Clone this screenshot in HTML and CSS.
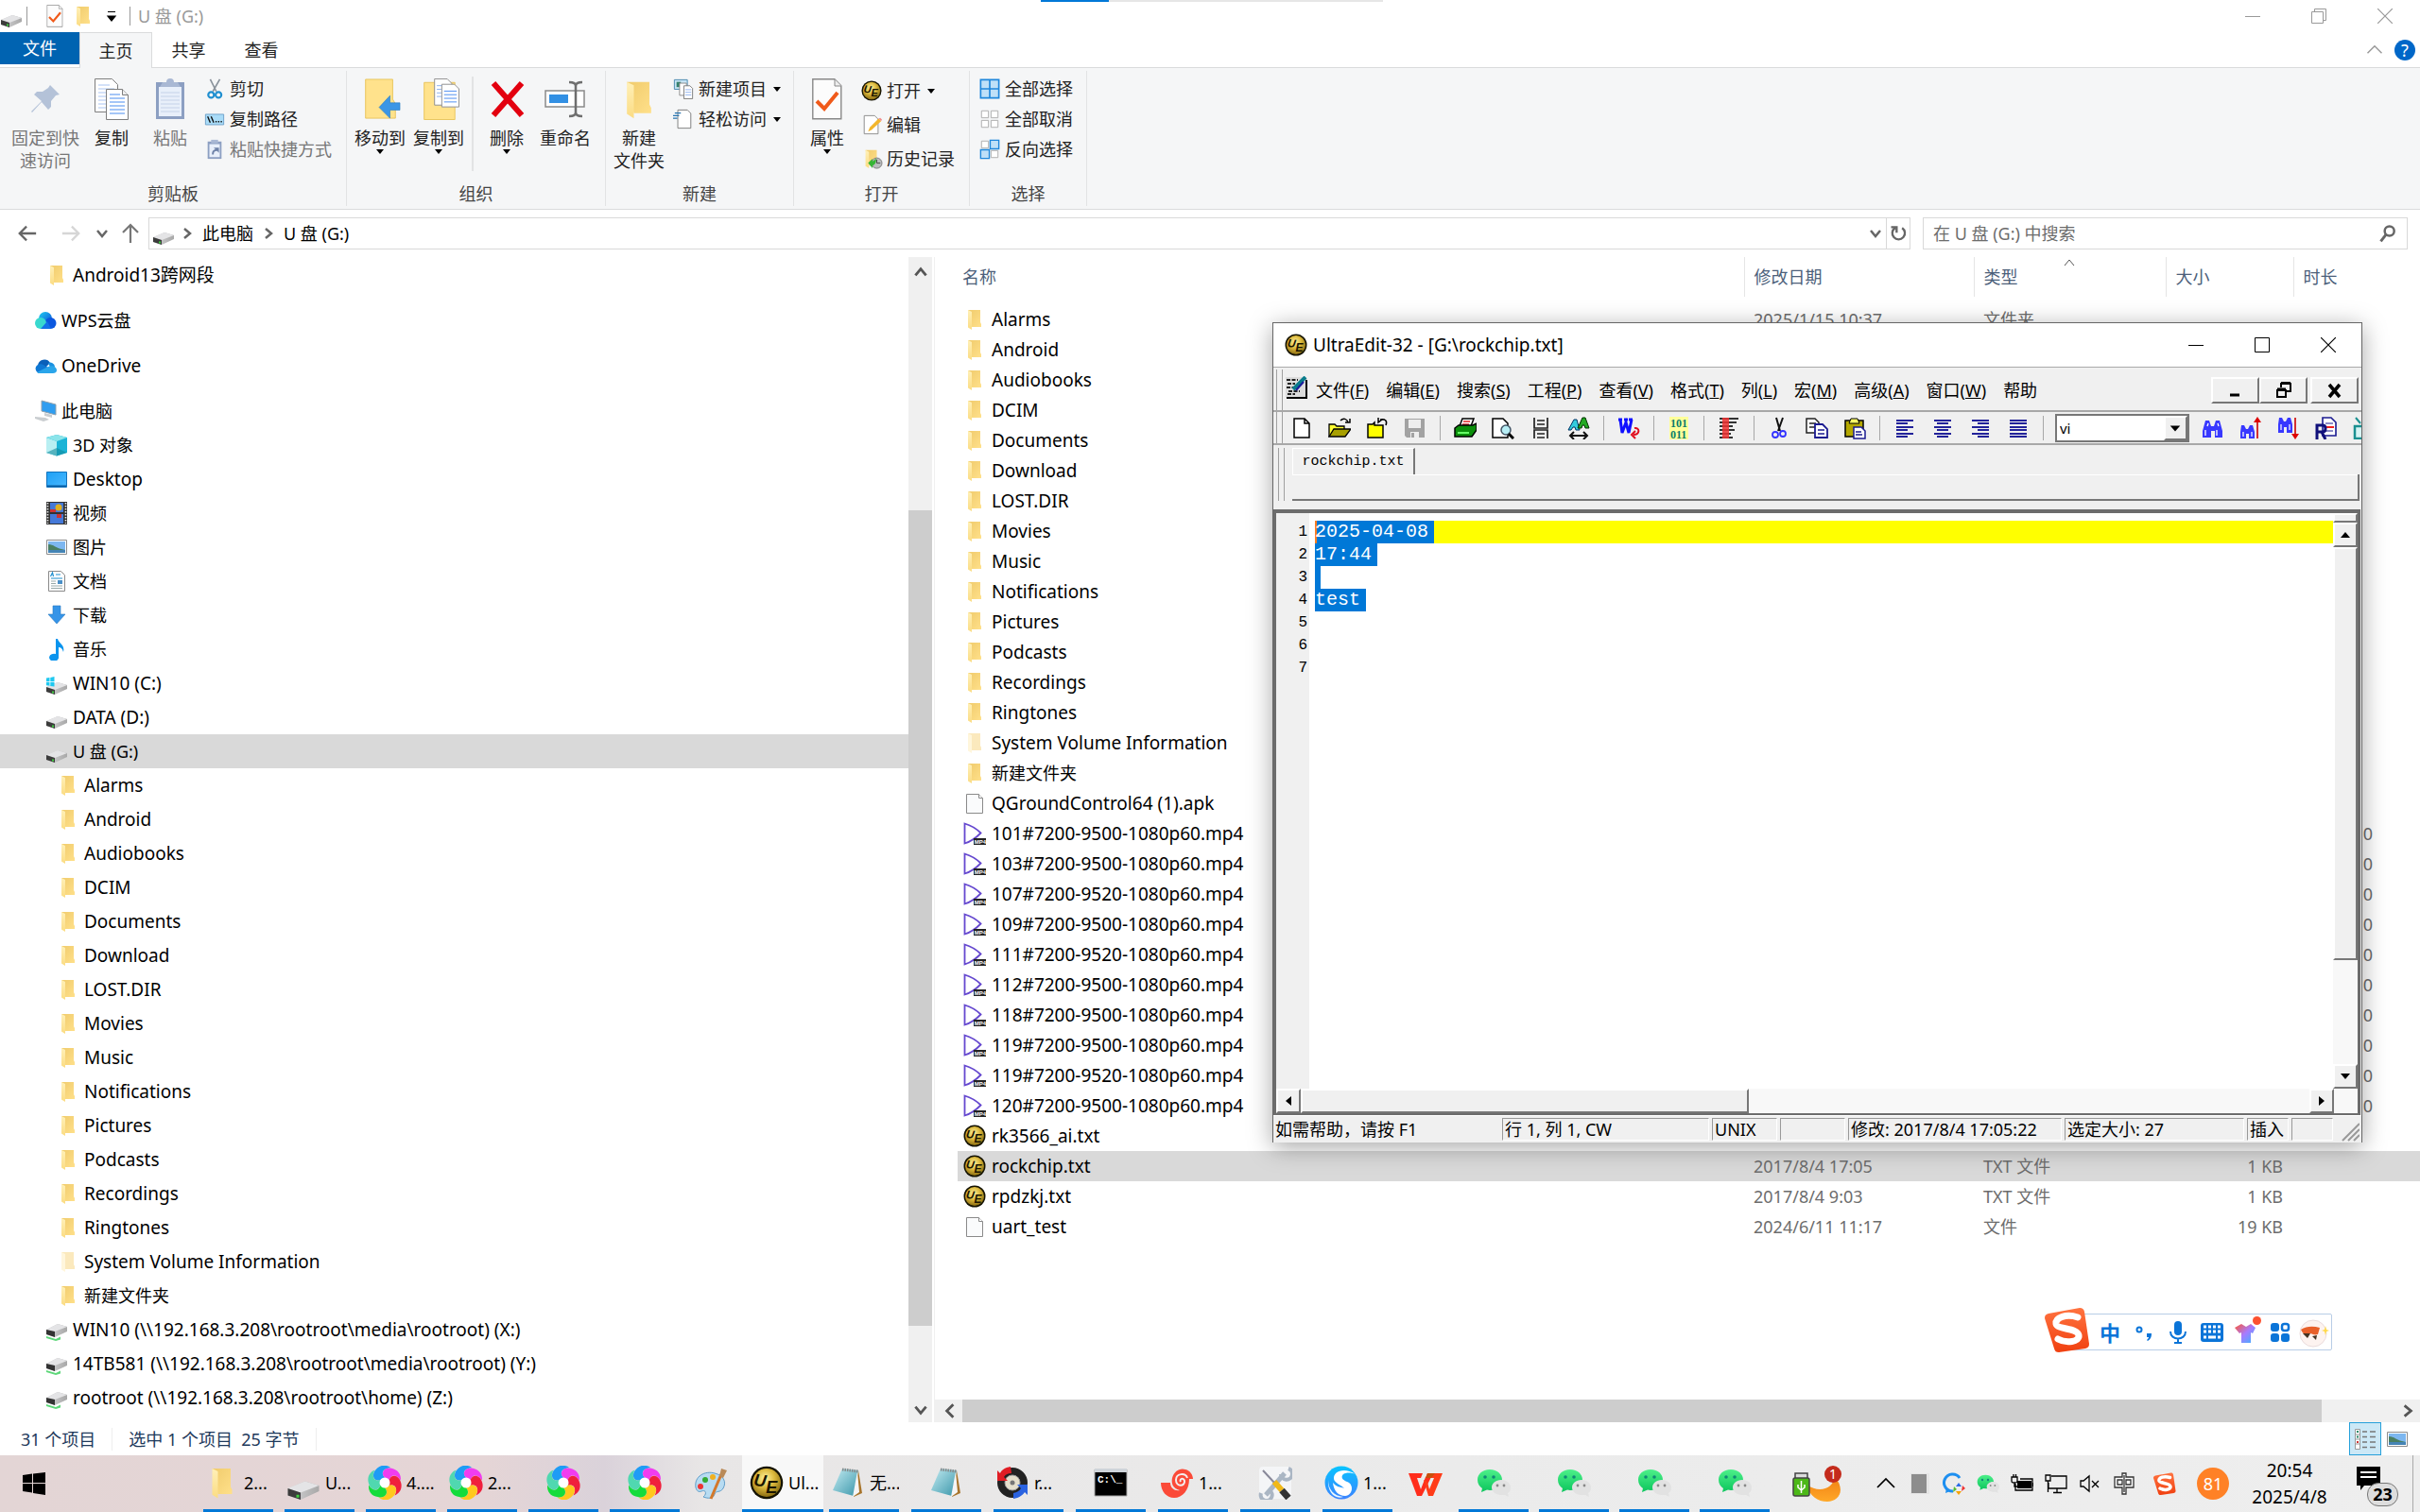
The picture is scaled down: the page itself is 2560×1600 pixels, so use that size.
FILE: index.html
```html
<!DOCTYPE html>
<html lang="zh-CN">
<head>
  <meta charset="UTF-8">
  <meta name="viewport" content="width=device-width, initial-scale=1.0">
  <title>U 盘 (G:)</title>
  <link rel="stylesheet" href="styles.css">
</head>
<body>

<!-- gradients -->
<svg class="gradients" aria-hidden="true">
  <defs>
    <linearGradient id="gFolder" x1="0" y1="0" x2="1" y2="1"><stop offset="0" stop-color="#f0cb6c"/><stop offset="1" stop-color="#ffe08a"/></linearGradient>
    <linearGradient id="gFlap" x1="0" y1="0" x2="0" y2="1"><stop offset="0" stop-color="#fff0b8"/><stop offset="1" stop-color="#fbdc83"/></linearGradient>
    <linearGradient id="gDrive" x1="0" y1="0" x2="1" y2="0"><stop offset="0" stop-color="#d6d6d8"/><stop offset="1" stop-color="#a8a8a8"/></linearGradient>
    <radialGradient id="gUe" cx=".45" cy=".35" r=".65"><stop offset="0" stop-color="#fff3a0"/><stop offset=".5" stop-color="#dcb93c"/><stop offset="1" stop-color="#8c6e12"/></radialGradient>
    <linearGradient id="gWps" x1="0" y1="0" x2="1" y2="1"><stop offset="0" stop-color="#20d0f0"/><stop offset="1" stop-color="#0a45d8"/></linearGradient>
    <linearGradient id="gScreen" x1="0" y1="0" x2="1" y2="1"><stop offset="0" stop-color="#1ea0f5"/><stop offset="1" stop-color="#49b8ff"/></linearGradient>
    <linearGradient id="gPad" x1="0" y1="0" x2="1" y2="1"><stop offset="0" stop-color="#c4ecf2"/><stop offset="1" stop-color="#3a96aa"/></linearGradient>
    <linearGradient id="gBird" x1="0" y1="0" x2="0" y2="1"><stop offset="0" stop-color="#08c4ff"/><stop offset="1" stop-color="#3d83ff"/></linearGradient>
    <linearGradient id="gChat" x1="0" y1="0" x2="0" y2="1"><stop offset="0" stop-color="#4df08a"/><stop offset="1" stop-color="#0cc55c"/></linearGradient>
    <linearGradient id="gMoon" x1="0" y1="0" x2="0" y2="1"><stop offset="0" stop-color="#f08014"/><stop offset="1" stop-color="#ffa828"/></linearGradient>
    <linearGradient id="gShirt" x1="0" y1="0" x2="1" y2="1"><stop offset="0" stop-color="#ff5630"/><stop offset=".5" stop-color="#a77bff"/><stop offset="1" stop-color="#35b6ff"/></linearGradient>
    <linearGradient id="gSogou" x1="0" y1="0" x2="0" y2="1"><stop offset="0" stop-color="#ff7340"/><stop offset="1" stop-color="#f04010"/></linearGradient>
  </defs>
</svg>

<!-- icon sprite -->
<svg class="sprite" aria-hidden="true">
  <symbol id="folder" viewBox="0 0 24 24"><path d="M5 2h13v13l1 2v3H9z" fill="url(#gFolder)"/><path d="M5 2l4 2v19l-4-2.500z" fill="url(#gFlap)"/></symbol>
  <symbol id="folder-open" viewBox="0 0 24 24"><path d="M5 2h13v13l1 2v3H9z" fill="#fbe9bd"/><path d="M5 2l4 2v19l-4-2.500z" fill="#fff6dc"/></symbol>
  <symbol id="drive" viewBox="0 0 24 24"><path d="M1 16l12-5 10 3v4l-13 6-9-3z" fill="url(#gDrive)"/><path d="M1 16l12-5 10 3-13 5z" fill="#e4e4e6"/><path d="M1 16l9 3v5l-9-3z" fill="#3c3c3c"/><path d="M7 20.500h2v2H7z" fill="#3fd03f"/></symbol>
  <symbol id="drive-win" viewBox="0 0 24 24"><use href="#drive"/><path d="M1 6.500l3.500-.500v4H1zM5.300 5.900L9.500 5v5H5.300zM1 10.800h3.500v4L1 14.300zM5.300 10.800h4.200v4.700l-4.200-.600z" fill="#1ec8f0"/></symbol>
  <symbol id="drive-net" viewBox="0 0 24 24"><path d="M1 12l12-6 10 3v5l-13 6-9-3z" fill="url(#gDrive)"/><path d="M1 12l12-6 10 3-13 5z" fill="#e4e4e6"/><path d="M1 12l9 2v6l-9-3z" fill="#333"/><path d="M1 19l10 3 5-2.500v3L11 24 1 21z" fill="#5ed77a"/></symbol>
  <symbol id="ue" viewBox="0 0 24 24"><circle cx="12" cy="12" r="11.500" fill="#141200"/><circle cx="12" cy="12" r="10" fill="url(#gUe)"/><text x="3" y="14.500" class="ue-text" transform="rotate(8 8 10)">U</text><text x="11.500" y="19" class="ue-text">E</text></symbol>
  <symbol id="doc" viewBox="0 0 24 24"><path d="M3.500 2.500h13l4 4v16h-17z" fill="#fafbfc" stroke="#8a8a8a"/><path d="M16.500 2.500v4h4" fill="#fff" stroke="#8a8a8a"/></symbol>
  <symbol id="mp4" viewBox="0 0 24 24"><path d="M1.500 1.500c7 2 12 5 17 10-5 5-10 9-17 11z" fill="#fff" stroke="#6548cf" stroke-width="1.800"/><path d="M11 17h13v7H11z" fill="#222"/><text x="11.800" y="23" class="mp4-text">MP4</text></symbol>
  <symbol id="wps-cloud" viewBox="0 0 24 24"><circle cx="12" cy="10" r="7" fill="url(#gWps)"/><circle cx="17.500" cy="15" r="6" fill="#0b57df"/><circle cx="7" cy="15" r="6" fill="#38d9cf"/><path d="M7 21l7-8 4 8z" fill="#1372e8"/></symbol>
  <symbol id="onedrive" viewBox="0 0 24 24"><path d="M4 12a7 7 0 0 1 13-3l-6 6z" fill="#0a5fb8"/><path d="M5 20a5 5 0 0 1-1-9c4-2 7 1 11 3z" fill="#0f78d4"/><path d="M15 9a5 5 0 0 1 7 4l-4 3z" fill="#1a90e0"/><path d="M3 19l12-6c4-2 9 0 9 4 0 2-2 3-4 3H5z" fill="#2aa5ea"/></symbol>
  <symbol id="pc" viewBox="0 0 24 24"><path d="M8 1l15 4v11L8 12z" fill="#2f9df0" stroke="#8fa0ac"/><path d="M11 14l8 2v3l-8-2zM1 18l11 1 4 2-6 2-9-3z" fill="#c9cdd0"/></symbol>
  <symbol id="cube" viewBox="0 0 24 24"><path d="M1 4l11-3 11 3v16l-11 3.500L1 20z" fill="#1cb4d6"/><path d="M1 4l11 4v15.500L1 20z" fill="#b9eff2"/><path d="M1 4l11-3 11 3-11 4z" fill="#8be4ea"/><path d="M12 15l11 5-11 3.500L1 20z" fill="#128b9c" opacity=".6"/></symbol>
  <symbol id="desktop" viewBox="0 0 24 24"><path d="M1.500 4.500h21v16h-21z" fill="url(#gScreen)" stroke="#1273bd"/><path d="M2 18.500h20V20H2z" fill="#0a5ea2"/></symbol>
  <symbol id="video" viewBox="0 0 24 24"><path d="M1 0h22v24H1z" fill="#333"/><path d="M5 1h14v10H5zM5 13h14v10H5z" fill="#4579d8"/><circle cx="14" cy="6" r="3.500" fill="#e0b020"/><path d="M5 8h6v3H5zM12 13h5v4h-5z" fill="#c33"/><path d="M2.500 1v22M21.500 1v22" stroke="#eee" stroke-width="1.600" stroke-dasharray="1.500 1.500"/></symbol>
  <symbol id="picture" viewBox="0 0 24 24"><path d="M1.500 4.500h21v15h-21z" fill="#fff" stroke="#8c8c8c"/><path d="M3 6h18v12H3z" fill="#7db7f0"/><path d="M3 9c6 0 8 4 14 5l4 1v3H3z" fill="#4a7f62"/><path d="M3 15h18v3H3z" fill="#4584b5"/></symbol>
  <symbol id="docs" viewBox="0 0 24 24"><path d="M3.500 1.500h13l4 4v17h-17z" fill="#fff" stroke="#8a8a8a"/><path d="M5.500 7l2-4 1 4M11 5h5M6 9h12" stroke="#1e8fd0" stroke-width="1.200" fill="none"/><path d="M6 12h5M6 14.500h5M6 17h12M6 19.500h12" stroke="#9aa"/><path d="M13 11h5v4h-5z" fill="#4a90c8"/></symbol>
  <symbol id="download" viewBox="0 0 24 24"><path d="M8 2h8v9h5l-9 10-9-10h5z" fill="#3594e8" stroke="#2878c0" stroke-width=".6"/></symbol>
  <symbol id="music" viewBox="0 0 24 24"><path d="M11 1h2c1 5 8 6 6 14-1-4-3-5-5-5v10a5 4 0 1 1-3-3z" fill="#0a94ee"/></symbol>

  <symbol id="pin" viewBox="0 0 32 32"><path d="M21 1l10 10-4 1-5 6 0 6-3 3-7-8-10 11-1-1 11-11-8-7 3-3h6l6-4z" fill="#b4c2d8"/></symbol>
  <symbol id="copy" viewBox="0 0 36 44"><path d="M.5.5h18l6 6v29H.5z" fill="#fff" stroke="#7e7e7e"/><path d="M4 7h12M4 11h17M4 15h17M4 19h17M4 23h9M4 27h9M4 31h9" stroke="#a9c4f2"/><path d="M12.500 11.500h17l6 6v26h-23z" fill="#fff" stroke="#7e7e7e"/><path d="M29.500 11.500v6h6" fill="#eee" stroke="#7e7e7e"/><path d="M16 17h11M16 21h16M16 25h16M16 29h16M16 33h16M16 37h16" stroke="#4a8df0"/></symbol>
  <symbol id="paste" viewBox="0 0 32 44"><path d="M1 4h30v39H1z" fill="#8c9fc2"/><path d="M4 9h24v31H4z" fill="#e8effa"/><path d="M8 4h4a4 4 0 0 1 8 0h4l3 5H5z" fill="#a9b8d4"/><path d="M6 15h20M6 19h20M6 23h20M6 27h20M6 31h20M6 35h20" stroke="#c5d2e8"/></symbol>
  <symbol id="cut" viewBox="0 0 24 24"><path d="M7 1l7 14M18 1l-8 14" stroke="#8a939c" stroke-width="1.800"/><circle cx="8" cy="19" r="3.300" fill="none" stroke="#1f8fd0" stroke-width="2.400"/><circle cx="16.500" cy="19" r="3.300" fill="none" stroke="#1f8fd0" stroke-width="2.400"/></symbol>
  <symbol id="path" viewBox="0 0 24 24"><path d="M1.500 6.500h21v12h-21z" fill="#a9dcf8" stroke="#6a9fc8"/><path d="M4 9l3 7M8 9l3 7M13 15h1.500M16 15h1.500M19 15h1.500" stroke="#111" stroke-width="1.500"/></symbol>
  <symbol id="shortcut" viewBox="0 0 24 24"><path d="M4 3h16v20H4z" fill="#8c9fc2"/><path d="M6 6h12v15H6z" fill="#e8effa"/><path d="M8 1h8v4H8z" fill="#a9b8d4"/><path d="M9 18c0-4 1-5 4-6l-2-2h6v6l-2-2c-3 0-4 1-4 4z" fill="#6e82a8"/></symbol>
  <symbol id="moveto" viewBox="-6 0 46 46"><path d="M1 1h30v22l3 5v16H1z" fill="#ffe28c" stroke="#e8c45c"/><path d="M39 27H28v-8L16 32l12 12v-9h11z" fill="#3b96e6" stroke="#2377c0" stroke-width=".6"/></symbol>
  <symbol id="copyto" viewBox="-6 0 46 46"><path d="M1 4.500h34v41H1z" fill="#ffe28c" stroke="#e8c45c"/><path d="M12.500.5h14l5 5v24h-19z" fill="#fff" stroke="#8e8e8e"/><path d="M15 8h6M15 12h5M15 16h5M15 20h5" stroke="#8bb0ee"/><path d="M20.500 6.500h14l5 5v20h-19z" fill="#fff" stroke="#8e8e8e"/><path d="M23 14h14M23 18h14M23 22h14M23 26h14" stroke="#4a8df0"/></symbol>
  <symbol id="delete" viewBox="0 0 42 44"><path d="M7 5l30 34M37 5L7 39" stroke="#e3000f" stroke-width="6"/></symbol>
  <symbol id="rename" viewBox="0 0 44 40"><path d="M1 11h41v17H1z" fill="#fff" stroke="#8a8a8a" stroke-width="1.500"/><path d="M5 15h20v9H5z" fill="#3290e4"/><path d="M26 2c5 0 7 1 7 4 0-3 2-4 7-4M33 5v30M26 38c5 0 7-1 7-4 0 3 2 4 7 4" fill="none" stroke="#6e6e6e" stroke-width="2.500"/></symbol>
  <symbol id="newitem" viewBox="0 0 24 24"><path d="M1.500 1.500h15v11h-15z" fill="#c6e4f5" stroke="#4585ad"/><path d="M4 4h5v6H4z" fill="#34806c"/><path d="M7.500 5.500h8v14h-8z" fill="#fff" stroke="#888"/><path d="M12.500 8.500h7l3 3v12h-10z" fill="#fff" stroke="#777"/><path d="M14 13h7M14 16h7M14 19h7" stroke="#8fb2f0"/></symbol>
  <symbol id="easy" viewBox="0 0 24 24"><path d="M5.500 1.500h11l4 4v17h-15z" fill="#fff" stroke="#777"/><path d="M2 5h7M0 8h7M0 11h5" stroke="#2673b0" stroke-width="1.500"/></symbol>
  <symbol id="props" viewBox="0 0 32 44"><path d="M.8.8h23l7 7v35h-30z" fill="#fcfcfc" stroke="#888" stroke-width="1.400"/><path d="M24 1v7h7" fill="#eee" stroke="#888"/><path d="M5 24l8 8 14-17" fill="none" stroke="#f05a1a" stroke-width="4"/></symbol>
  <symbol id="edit" viewBox="0 0 24 24"><path d="M3.500 1.500h12l4 4v17h-16z" fill="#fff" stroke="#888"/><path d="M8 20l2-5L20 5l3 3-11 10z" fill="#f3b62c"/><path d="M20 5l2-1 2 2-1 2z" fill="#f28b8b"/></symbol>
  <symbol id="history" viewBox="0 0 24 24"><use href="#folder"/><circle cx="18" cy="17" r="6" fill="#b9bcbe" stroke="#777"/><path d="M18 13v4h4" fill="none" stroke="#444"/><path d="M8 17l5-5v3c3-1 4-3 4-4 1 5-1 8-4 9v3z" fill="#35b535"/></symbol>
  <symbol id="selall" viewBox="0 0 24 24"><path d="M1.500 1.500h21v21h-21zM12 1v22M1 12h22" fill="#bfe0f8" stroke="#1f87dc" stroke-width="1.800"/></symbol>
  <symbol id="selnone" viewBox="0 0 24 24"><path d="M2.500 2.500h8v8h-8zM13.500 2.500h8v8h-8zM2.500 13.500h8v8h-8zM13.500 13.500h8v8h-8z" fill="#fff" stroke="#aaa"/></symbol>
  <symbol id="selinv" viewBox="0 0 24 24"><path d="M2.500 2.500h8v8h-8zM13.500 13.500h8v8h-8z" fill="#fff" stroke="#aaa"/><path d="M12.500 1.500h10v10h-10zM1.500 12.500h10v10h-10z" fill="#bfe0f8" stroke="#1f87dc" stroke-width="1.500"/></symbol>

  <!-- editor toolbar -->
  <symbol id="e-app" viewBox="0 0 24 24"><path d="M1 1h22v22H1z" fill="#ddd"/><path d="M23 4v19H2" fill="none" stroke="#000" stroke-width="2"/><path d="M2 4h12M3 8h8M2 12h7M4 16h12M3 19h8" stroke="#222" stroke-width="2" stroke-dasharray="4 1.500"/><path d="M22 1L9 14" stroke="#0a7c8c" stroke-width="4"/><path d="M20 6l-8 9" stroke="#1a1a9a" stroke-width="2"/></symbol>
  <symbol id="e-new" viewBox="0 0 24 24"><path d="M4 2h11l5 5v15H4z" fill="#fff" stroke="#000" stroke-width="1.500"/><path d="M15 2v5h5" fill="none" stroke="#000" stroke-width="1.500"/></symbol>
  <symbol id="e-open" viewBox="0 0 24 24"><path d="M1 21V8h6l2 2h8v3" fill="#ff3" stroke="#000" stroke-width="1.300"/><path d="M1 21l5-8h18l-6 8z" fill="#a8a000" stroke="#000" stroke-width="1.300"/><path d="M13 4c3-3 7-2 8 2M18 6h5V2" fill="none" stroke="#000" stroke-width="1.500"/></symbol>
  <symbol id="e-close" viewBox="0 0 24 24"><path d="M2 8h5l2-2v3h9v13H2z" fill="#ff0" stroke="#000" stroke-width="1.500"/><path d="M21 9c2-5-1-7-6-6M13 1v5l4-3" fill="none" stroke="#000" stroke-width="1.500"/></symbol>
  <symbol id="e-save" viewBox="0 0 24 24"><path d="M1 2h21v20H3l-2-2z" fill="#a2a2a2"/><path d="M5 3h13v9H5zM7 16h9v6H7z" fill="#eee"/><path d="M8 17h3v5H8z" fill="#a2a2a2"/></symbol>
  <symbol id="e-print" viewBox="0 0 24 24"><path d="M6 10l3-8h12l-3 8z" fill="#fff" stroke="#000" stroke-width="1.500"/><path d="M10 5h7M9 8h7" stroke="#d22" stroke-width="1.500"/><path d="M1 12l4-3h15l4-2v7l-5 7H1z" fill="#0b8f0b" stroke="#000" stroke-width="1.500"/><path d="M4 17h12" stroke="#6f6" stroke-width="2"/></symbol>
  <symbol id="e-preview" viewBox="0 0 24 24"><path d="M1 2h11l5 5v15H1z" fill="#fff" stroke="#000" stroke-width="1.500"/><circle cx="15" cy="14" r="5" fill="#b7eef5" stroke="#456" stroke-width="1.500"/><path d="M18 18l5 5" stroke="#000" stroke-width="3"/></symbol>
  <symbol id="e-layout" viewBox="0 0 24 24"><path d="M5 1v11h14V1M5 23v-9h14v9M8 4h8M8 8h8M8 18h8M8 22h8" fill="none" stroke="#222" stroke-width="1.700"/></symbol>
  <symbol id="e-replace" viewBox="0 0 24 24"><path d="M1 14L7 3h3l3 11h-4l-1-3H6l-2 3z" fill="#3cd" stroke="#036" /><path d="M11 12l5-11h3l4 11h-4l-1-3h-2l-1 3z" fill="#2a2" stroke="#030"/><path d="M4 20h16M7 16l-4 4 4 4M17 16l4 4-4 4" fill="none" stroke="#111" stroke-width="2"/></symbol>
  <symbol id="e-wrap" viewBox="0 0 24 24"><path d="M1 3h4M7 3h4M12 3h4M3 3l2 14 4-11 3 11 3-14" fill="none" stroke="#1010ff" stroke-width="3"/><path d="M18 12c6-1 6 7-1 7M19 15l-4 4 4 4" fill="none" stroke="#e01020" stroke-width="2"/></symbol>
  <symbol id="e-hex" viewBox="0 0 24 24"><path d="M2 0h20v24H2z" fill="#ffff9a"/><text x="3" y="11" class="hex-text">101</text><text x="3" y="23" class="hex-text">011</text></symbol>
  <symbol id="e-para" viewBox="0 0 24 24"><path d="M2 2h20M2 6h18M2 10h14M2 14h16M2 18h12M2 22h14" stroke="#333" stroke-width="2"/><path d="M5 1h7v22H5z" fill="#e33" opacity=".85"/></symbol>
  <symbol id="e-cut" viewBox="0 0 24 24"><path d="M9 1l4 14M16 1l-5 14" stroke="#111" stroke-width="2"/><circle cx="8" cy="19" r="3" fill="none" stroke="#33f" stroke-width="1.800"/><circle cx="16" cy="18" r="3" fill="none" stroke="#33f" stroke-width="1.800"/></symbol>
  <symbol id="e-copy" viewBox="0 0 24 24"><path d="M1 2h9l4 4v11H1z" fill="#fff" stroke="#222" stroke-width="1.500"/><path d="M4 7h7M4 11h7" stroke="#222" stroke-width="1.500"/><path d="M10 8h8l5 5v9H10z" fill="#fff" stroke="#1a1a90" stroke-width="1.800"/><path d="M13 14h7M13 18h7" stroke="#1a1a90" stroke-width="1.500"/></symbol>
  <symbol id="e-paste" viewBox="0 0 24 24"><path d="M2 4h19v17H2z" fill="#b5a800" stroke="#000" stroke-width="1.500"/><path d="M6 7l2-5h7l2 5z" fill="#ff6" stroke="#000"/><path d="M11 11h8l4 4v8H11z" fill="#fff" stroke="#1a1a90" stroke-width="1.500"/><path d="M13 16h6M13 19h7" stroke="#1a1a90" stroke-width="1.500"/></symbol>
  <symbol id="e-left" viewBox="0 0 24 24"><path d="M3 4h18M3 7h12M3 11h18M3 14h12M3 18h18M3 21h12" stroke="#22229a" stroke-width="1.800"/></symbol>
  <symbol id="e-center" viewBox="0 0 24 24"><path d="M3 4h18M6 7h12M3 11h18M6 14h12M3 18h18M6 21h12" stroke="#22229a" stroke-width="1.800"/></symbol>
  <symbol id="e-right" viewBox="0 0 24 24"><path d="M3 4h18M9 7h12M3 11h18M9 14h12M3 18h18M9 21h12" stroke="#22229a" stroke-width="1.800"/></symbol>
  <symbol id="e-justify" viewBox="0 0 24 24"><path d="M3 4h18M3 7h18M3 11h18M3 14h18M3 18h18M3 21h18" stroke="#22229a" stroke-width="1.800"/></symbol>
  <symbol id="e-find" viewBox="0 0 24 24"><path d="M5 4h4l2 6h3l2-6h4l3 11v7h-8v-7h-4v7H2v-7z" fill="#3838ff"/><path d="M5 14v6M17 14v6M8 7l-1 3M18 7l1 3" stroke="#fff" stroke-width="1.300"/></symbol>
  <symbol id="e-prev" viewBox="0 0 24 24"><path d="M3 9h3l2 4h2l2-4h3l2 7v7h-6v-5H8v5H2v-7z" fill="#3838ff"/><path d="M5 16v5M14 16v5" stroke="#fff" stroke-width="1.200"/><path d="M20 23V4" stroke="#c00" stroke-width="1.600"/><path d="M20 0l4 6h-8z" fill="#d00"/></symbol>
  <symbol id="e-next" viewBox="0 0 24 24"><path d="M3 1h3l2 4h2l2-4h3l2 7v9h-6v-6H8v6H2V8z" fill="#3838ff"/><path d="M5 8v6M14 8v6" stroke="#fff" stroke-width="1.200"/><path d="M20 1v19" stroke="#c00" stroke-width="1.600"/><path d="M20 24l4-6h-8z" fill="#d00"/></symbol>
  <symbol id="e-repl" viewBox="0 0 24 24"><path d="M9 1h9l5 5v14H9z" fill="#fff" stroke="#1a1a90" stroke-width="1.600"/><path d="M12 7h8M12 15h8" stroke="#1a1a90"/><path d="M12 11h9" stroke="#e22" stroke-width="2"/><path d="M3 24V9h6c4 0 4 7 0 7H4M8 16l4 8" fill="none" stroke="#10107a" stroke-width="3"/></symbol>
  <symbol id="e-more" viewBox="0 0 24 24"><path d="M3 10h14v13H3z" fill="#d8f4f4" stroke="#1a9090" stroke-width="2.500"/><path d="M4 1l5 6" stroke="#1a9090" stroke-width="2"/></symbol>

  <!-- taskbar -->
  <symbol id="pinwheel" viewBox="0 0 36 36"><g transform="translate(18 18)">
    <path d="M-2-5C-9-9-5-17 4-17 10-17 14-13 15-8 9-13 2-11 4-3z" fill="#1e9cf5" transform="rotate(-40)"/>
    <path d="M-2-5C-9-9-5-17 4-17 10-17 14-13 15-8 9-13 2-11 4-3z" fill="#f03cf0" transform="rotate(20)"/>
    <path d="M-2-5C-9-9-5-17 4-17 10-17 14-13 15-8 9-13 2-11 4-3z" fill="#f0203c" transform="rotate(80)"/>
    <path d="M-2-5C-9-9-5-17 4-17 10-17 14-13 15-8 9-13 2-11 4-3z" fill="#ffc81e" transform="rotate(140)"/>
    <path d="M-2-5C-9-9-5-17 4-17 10-17 14-13 15-8 9-13 2-11 4-3z" fill="#14dc3c" transform="rotate(200)"/>
    <path d="M-2-5C-9-9-5-17 4-17 10-17 14-13 15-8 9-13 2-11 4-3z" fill="#50d8b0" transform="rotate(260)"/>
    <circle r="5.500" fill="#fff"/></g></symbol>
  <symbol id="paint" viewBox="0 0 36 36"><path d="M2 22C0 10 12 4 22 7c9 2 13 9 9 16-3 5-8 2-9 6-1 5-7 5-12 3 4-3 3-8-2-6-3 1-5 0-6-4z" fill="#b8dcf2" stroke="#5f9cc8"/><circle cx="7" cy="21" r="3" fill="#e33"/><circle cx="12" cy="14" r="3" fill="#3a3"/><circle cx="20" cy="11" r="3" fill="#f0b020"/><path d="M29 8L18 34" stroke="#d4782a" stroke-width="3"/><path d="M27 10l2-8 6 2-4 8z" fill="#b98a58"/></symbol>
  <symbol id="notepad" viewBox="0 0 36 36"><path d="M29 5l4 24-9 4z" fill="#a8752c"/><path d="M12 3l17 2-5 27L2 26z" fill="url(#gPad)"/><path d="M28 6l2 22-7 5z" fill="#f5f5f5"/><path d="M12 4l17 2" stroke="#888" stroke-width="3" stroke-dasharray="1.500 1"/></symbol>
  <symbol id="sync" viewBox="0 0 36 36"><circle cx="18" cy="18" r="12" fill="none" stroke="#222" stroke-width="8"/><circle cx="18" cy="18" r="8" fill="#e5dfcc" stroke="#999"/><circle cx="18" cy="18" r="2.500" fill="#777"/><path d="M16 1C10 2 6 5 5 8L2 5v11h11L9 12c2-3 4-4 8-4z" fill="#e01c24"/><path d="M19 35c6-1 10-4 12-7l3 3V20H23l4 4c-2 3-4 4-8 5z" fill="#2a62e0"/></symbol>
  <symbol id="cmd" viewBox="0 0 36 36"><path d="M1 4h34v28H1z" fill="#000" stroke="#aaa"/><path d="M1 3h34v4H1z" fill="#cfd4da"/><text x="4" y="18" class="cmd-text">C:\_</text></symbol>
  <symbol id="shell" viewBox="0 0 36 36"><path d="M1 18h10c0 6 5 9 10 8-8-2-9-8-8-13C15 6 21 2 27 4c5 1 8 6 8 10h-4c0 12-7 20-16 20C7 34 1 27 1 18z" fill="#fb4a38"/><path d="M29 13c-2-6-12-5-12 2 0 8 10 7 9 1-1-4-6-2-4 1" fill="none" stroke="#f4eeee" stroke-width="2"/></symbol>
  <symbol id="tools" viewBox="0 0 36 36"><rect x="1" y="1" width="34" height="34" rx="4" fill="#f4f5f7"/><path d="M8 31L28 8" stroke="#aab6c4" stroke-width="5"/><path d="M3 29a6 6 0 1 0 9-3M24 9a6 6 0 1 0 8-6" fill="none" stroke="#aab6c4" stroke-width="4"/><path d="M5 5l13 14" stroke="#889" stroke-width="2"/><path d="M17 17l8 9" stroke="#f0b818" stroke-width="6"/><path d="M25 26l7 8" stroke="#333" stroke-width="7"/></symbol>
  <symbol id="bird" viewBox="0 0 36 36"><circle cx="18" cy="18" r="17.500" fill="url(#gBird)"/><path d="M33 9C21 1 9 6 10 14c1 5 8 6 11 10-5-2-8-1-12-6 1 9 6 14 13 14 9-1 9-13 2-15-5-2-7-5-4-8 3-2 8-2 13 0z" fill="#fff"/><path d="M4 15c0 10 6 17 16 18-9 3-17-5-16-18z" fill="#e8f7ff"/></symbol>
  <symbol id="wps" viewBox="0 0 36 36"><path d="M0 7h15l-2 5H9l4 12 5-13h6L14 31H9z" fill="#ff2d1c"/><path d="M16 14l5 17h5l10-24H20l-2 5h9l-5 12-2-8z" fill="#ff3c18"/><path d="M20 7h8l-4 5h-6z" fill="#c8500c"/></symbol>
  <symbol id="wechat" viewBox="0 0 36 36"><path d="M14 4c8 0 13 5 13 11S22 26 14 26l-3-.5L5 28l1-4C3 22 1 19 1 15 1 9 6 4 14 4z" fill="url(#gChat)"/><path d="M26 15c6 0 10 4 10 8 0 3-1 5-3 6l1 4-4-2h-4c-6 0-10-4-10-8s4-8 10-8z" fill="#e2e2e2"/><circle cx="9" cy="12" r="1.800" fill="#187"/><circle cx="18" cy="12" r="1.800" fill="#187"/><circle cx="22" cy="21" r="1.400" fill="#888"/><circle cx="29" cy="21" r="1.400" fill="#888"/></symbol>
  <symbol id="sogou" viewBox="0 0 48 48"><path d="M4 7l33-6c3 0 4 1 5 4l5 34c0 3-1 4-4 5l-28 4c-3 0-4-1-5-4L0 12c0-3 1-4 4-5z" fill="url(#gSogou)"/><path d="M35 11C23 7 11 11 12 18c1 6 23 4 24 12 1 7-13 9-22 4" fill="none" stroke="#fff" stroke-width="7" stroke-linecap="round"/></symbol>
  <symbol id="chev-up" viewBox="0 0 24 24"><path d="M3 16l9-9 9 9" fill="none" stroke="currentColor" stroke-width="1.700"/></symbol>
  <symbol id="chev-down" viewBox="0 0 16 16"><path d="M3 5l5 6 5-6" fill="none" stroke="currentColor" stroke-width="2.500"/></symbol>
  <symbol id="chev-top" viewBox="0 0 16 16"><path d="M3 11l5-6 5 6" fill="none" stroke="currentColor" stroke-width="2.500"/></symbol>
  <symbol id="chev-right" viewBox="0 0 16 16"><path d="M5 3l6 5-6 5" fill="none" stroke="currentColor" stroke-width="2.500"/></symbol>
  <symbol id="chev-left" viewBox="0 0 16 16"><path d="M11 2L5 8l6 6" fill="none" stroke="currentColor" stroke-width="2.500"/></symbol>
  <symbol id="min" viewBox="0 0 16 16"><path d="M0 8.500h16" stroke="currentColor"/></symbol>
  <symbol id="max" viewBox="0 0 16 16"><path d="M.5.5h15v15H.5z" fill="none" stroke="currentColor"/></symbol>
  <symbol id="restore" viewBox="0 0 16 16"><path d="M.5 3.500h12v12H.5zM3.500 3V.5h12v12H13" fill="none" stroke="currentColor"/></symbol>
  <symbol id="close" viewBox="0 0 16 16"><path d="M0 0l16 16M16 0L0 16" stroke="currentColor" stroke-width="1.200"/></symbol>
</svg>

<div class="explorer">
  <header class="titlebar">
    <svg class="ico"><use href="#drive"/></svg>
    <span class="bar"></span>
    <button class="quick" aria-label="属性"><svg class="ico-sm" viewBox="0 0 32 44"><use href="#props"/></svg></button>
    <button class="quick" aria-label="新建文件夹"><svg class="ico"><use href="#folder"/></svg></button>
    <button class="quick" aria-label="自定义快速访问工具栏"><svg class="ico" viewBox="0 0 24 24"><path d="M8 7.500h8M8 12h8l-4 5z" stroke="#000" stroke-width="1.200"/></svg></button>
    <span class="bar"></span>
    <span class="title">U 盘 (G:)</span>
    <div class="progress"><span></span></div>
    <div class="win-buttons">
      <button aria-label="最小化"><svg><use href="#min"/></svg></button>
      <button aria-label="还原"><svg><use href="#restore"/></svg></button>
      <button aria-label="关闭"><svg><use href="#close"/></svg></button>
    </div>
  </header>

  <nav class="tabs">
    <button class="tab file">文件</button>
    <button class="tab active">主页</button>
    <button class="tab">共享</button>
    <button class="tab">查看</button>
    <div class="tab-tools">
      <button aria-label="折叠功能区"><svg class="ico"><use href="#chev-up"/></svg></button>
      <button class="help" aria-label="帮助">?</button>
    </div>
  </nav>

  <div class="ribbon">
    <section class="group g-clip">
      <div class="group-body">
        <button class="big wide dim"><svg class="i32"><use href="#pin"/></svg><span>固定到快<br>速访问</span></button>
        <button class="big"><svg><use href="#copy"/></svg><span>复制</span></button>
        <button class="big dim"><svg><use href="#paste"/></svg><span>粘贴</span></button>
        <div class="smalls">
          <button class="small"><svg class="ico"><use href="#cut"/></svg>剪切</button>
          <button class="small"><svg class="ico"><use href="#path"/></svg>复制路径</button>
          <button class="small dim"><svg class="ico"><use href="#shortcut"/></svg>粘贴快捷方式</button>
        </div>
      </div>
      <h2>剪贴板</h2>
    </section>
    <section class="group g-org">
      <div class="group-body">
        <button class="big drop"><svg><use href="#moveto"/></svg><span>移动到</span></button>
        <button class="big drop"><svg><use href="#copyto"/></svg><span>复制到</span></button>
        <span class="vline"></span>
        <button class="big drop"><svg><use href="#delete"/></svg><span>删除</span></button>
        <button class="big"><svg><use href="#rename"/></svg><span>重命名</span></button>
      </div>
      <h2>组织</h2>
    </section>
    <section class="group g-new">
      <div class="group-body">
        <button class="big"><svg><use href="#folder"/></svg><span>新建<br>文件夹</span></button>
        <div class="smalls">
          <button class="small drop"><svg class="ico"><use href="#newitem"/></svg>新建项目</button>
          <button class="small drop"><svg class="ico"><use href="#easy"/></svg>轻松访问</button>
        </div>
      </div>
      <h2>新建</h2>
    </section>
    <section class="group g-open">
      <div class="group-body">
        <button class="big drop"><svg><use href="#props"/></svg><span>属性</span></button>
        <div class="smalls loose">
          <button class="small drop"><svg class="ico"><use href="#ue"/></svg>打开</button>
          <button class="small"><svg class="ico"><use href="#edit"/></svg>编辑</button>
          <button class="small"><svg class="ico"><use href="#history"/></svg>历史记录</button>
        </div>
      </div>
      <h2>打开</h2>
    </section>
    <section class="group g-sel">
      <div class="group-body">
        <div class="smalls">
          <button class="small"><svg class="ico"><use href="#selall"/></svg>全部选择</button>
          <button class="small"><svg class="ico"><use href="#selnone"/></svg>全部取消</button>
          <button class="small"><svg class="ico"><use href="#selinv"/></svg>反向选择</button>
        </div>
      </div>
      <h2>选择</h2>
    </section>
  </div>

  <div class="address-row">
    <button class="arrow" aria-label="后退"><svg viewBox="0 0 24 24"><path d="M22 12H4M11 4l-8 8 8 8" fill="none" stroke="#666" stroke-width="2.500"/></svg></button>
    <button class="arrow" aria-label="前进"><svg viewBox="0 0 24 24"><path d="M2 12h18M13 4l8 8-8 8" fill="none" stroke="#d6d6d6" stroke-width="2.500"/></svg></button>
    <button class="recent" aria-label="最近位置"><svg><use href="#chev-down"/></svg></button>
    <button class="up" aria-label="上移"><svg viewBox="0 0 24 24"><path d="M12 22V3M4 11l8-8 8 8" fill="none" stroke="#777" stroke-width="2.200"/></svg></button>
    <div class="address">
      <svg class="ico"><use href="#drive"/></svg>
      <svg class="sep"><use href="#chev-right"/></svg>
      <a href="#">此电脑</a>
      <svg class="sep"><use href="#chev-right"/></svg>
      <a href="#">U 盘 (G:)</a>
      <button class="addr-drop" aria-label="历史"><svg><use href="#chev-down"/></svg></button>
      <button class="refresh" aria-label="刷新"><svg viewBox="0 0 24 24"><path d="M17 5a8 8 0 1 1-9 0M3 4h7v7" fill="none" stroke="#666" stroke-width="2.800"/></svg></button>
    </div>
    <label class="search">
      <input type="text" aria-label="搜索" placeholder="在 U 盘 (G:) 中搜索">
      <svg viewBox="0 0 24 24"><circle cx="14" cy="9" r="6" fill="none" stroke="#666" stroke-width="3"/><path d="M10 13l-7 9" stroke="#666" stroke-width="3.500"/></svg>
    </label>
  </div>

  <div class="panes">
    <aside class="tree">
      <ul>
        <li><a class="l2" href="#"><svg class="ico"><use href="#folder"/></svg>Android13跨网段</a></li>
        <li class="root"><a class="zh" href="#"><svg class="ico"><use href="#wps-cloud"/></svg>WPS云盘</a></li>
        <li class="root"><a href="#"><svg class="ico"><use href="#onedrive"/></svg>OneDrive</a></li>
        <li class="root"><a class="zh" href="#"><svg class="ico"><use href="#pc"/></svg>此电脑</a></li>
        <li><a class="l2 zh" href="#"><svg class="ico"><use href="#cube"/></svg>3D 对象</a></li>
        <li><a class="l2" href="#"><svg class="ico"><use href="#desktop"/></svg>Desktop</a></li>
        <li><a class="l2 zh" href="#"><svg class="ico"><use href="#video"/></svg>视频</a></li>
        <li><a class="l2 zh" href="#"><svg class="ico"><use href="#picture"/></svg>图片</a></li>
        <li><a class="l2 zh" href="#"><svg class="ico"><use href="#docs"/></svg>文档</a></li>
        <li><a class="l2 zh" href="#"><svg class="ico"><use href="#download"/></svg>下载</a></li>
        <li><a class="l2 zh" href="#"><svg class="ico"><use href="#music"/></svg>音乐</a></li>
        <li><a class="l2" href="#"><svg class="ico"><use href="#drive-win"/></svg>WIN10 (C:)</a></li>
        <li><a class="l2" href="#"><svg class="ico"><use href="#drive"/></svg>DATA (D:)</a></li>
        <li><a class="l2 zh selected" href="#"><svg class="ico"><use href="#drive"/></svg>U 盘 (G:)</a></li>
        <li><a class="l3" href="#"><svg class="ico"><use href="#folder"/></svg>Alarms</a></li>
        <li><a class="l3" href="#"><svg class="ico"><use href="#folder"/></svg>Android</a></li>
        <li><a class="l3" href="#"><svg class="ico"><use href="#folder"/></svg>Audiobooks</a></li>
        <li><a class="l3" href="#"><svg class="ico"><use href="#folder"/></svg>DCIM</a></li>
        <li><a class="l3" href="#"><svg class="ico"><use href="#folder"/></svg>Documents</a></li>
        <li><a class="l3" href="#"><svg class="ico"><use href="#folder"/></svg>Download</a></li>
        <li><a class="l3" href="#"><svg class="ico"><use href="#folder"/></svg>LOST.DIR</a></li>
        <li><a class="l3" href="#"><svg class="ico"><use href="#folder"/></svg>Movies</a></li>
        <li><a class="l3" href="#"><svg class="ico"><use href="#folder"/></svg>Music</a></li>
        <li><a class="l3" href="#"><svg class="ico"><use href="#folder"/></svg>Notifications</a></li>
        <li><a class="l3" href="#"><svg class="ico"><use href="#folder"/></svg>Pictures</a></li>
        <li><a class="l3" href="#"><svg class="ico"><use href="#folder"/></svg>Podcasts</a></li>
        <li><a class="l3" href="#"><svg class="ico"><use href="#folder"/></svg>Recordings</a></li>
        <li><a class="l3" href="#"><svg class="ico"><use href="#folder"/></svg>Ringtones</a></li>
        <li><a class="l3" href="#"><svg class="ico"><use href="#folder-open"/></svg>System Volume Information</a></li>
        <li><a class="l3 zh" href="#"><svg class="ico"><use href="#folder"/></svg>新建文件夹</a></li>
        <li><a class="l2" href="#"><svg class="ico"><use href="#drive-net"/></svg>WIN10 (\\192.168.3.208\rootroot\media\rootroot) (X:)</a></li>
        <li><a class="l2" href="#"><svg class="ico"><use href="#drive-net"/></svg>14TB581 (\\192.168.3.208\rootroot\media\rootroot) (Y:)</a></li>
        <li><a class="l2" href="#"><svg class="ico"><use href="#drive-net"/></svg>rootroot (\\192.168.3.208\rootroot\home) (Z:)</a></li>
      </ul>
    </aside>
    <div class="vscroll">
      <svg><use href="#chev-top"/></svg>
      <div class="track"><div class="thumb"></div></div>
      <svg><use href="#chev-down"/></svg>
    </div>

    <main class="files">
      <table>
        <colgroup><col class="c-name"><col class="c-date"><col class="c-type"><col class="c-size"><col></colgroup>
        <thead>
          <tr><th>名称</th><th>修改日期</th><th class="sorted">类型<svg viewBox="0 0 12 8"><path d="M1 7l5-6 5 6" fill="none" stroke="#555"/></svg></th><th>大小</th><th>时长</th></tr>
        </thead>
        <tbody>
          <tr><td><svg class="ico"><use href="#folder"/></svg>Alarms</td><td>2025/1/15 10:37</td><td>文件夹</td><td></td><td></td></tr>
          <tr><td><svg class="ico"><use href="#folder"/></svg>Android</td><td></td><td></td><td></td><td></td></tr>
          <tr><td><svg class="ico"><use href="#folder"/></svg>Audiobooks</td><td></td><td></td><td></td><td></td></tr>
          <tr><td><svg class="ico"><use href="#folder"/></svg>DCIM</td><td></td><td></td><td></td><td></td></tr>
          <tr><td><svg class="ico"><use href="#folder"/></svg>Documents</td><td></td><td></td><td></td><td></td></tr>
          <tr><td><svg class="ico"><use href="#folder"/></svg>Download</td><td></td><td></td><td></td><td></td></tr>
          <tr><td><svg class="ico"><use href="#folder"/></svg>LOST.DIR</td><td></td><td></td><td></td><td></td></tr>
          <tr><td><svg class="ico"><use href="#folder"/></svg>Movies</td><td></td><td></td><td></td><td></td></tr>
          <tr><td><svg class="ico"><use href="#folder"/></svg>Music</td><td></td><td></td><td></td><td></td></tr>
          <tr><td><svg class="ico"><use href="#folder"/></svg>Notifications</td><td></td><td></td><td></td><td></td></tr>
          <tr><td><svg class="ico"><use href="#folder"/></svg>Pictures</td><td></td><td></td><td></td><td></td></tr>
          <tr><td><svg class="ico"><use href="#folder"/></svg>Podcasts</td><td></td><td></td><td></td><td></td></tr>
          <tr><td><svg class="ico"><use href="#folder"/></svg>Recordings</td><td></td><td></td><td></td><td></td></tr>
          <tr><td><svg class="ico"><use href="#folder"/></svg>Ringtones</td><td></td><td></td><td></td><td></td></tr>
          <tr><td><svg class="ico"><use href="#folder-open"/></svg>System Volume Information</td><td></td><td></td><td></td><td></td></tr>
          <tr><td class="zh"><svg class="ico"><use href="#folder"/></svg>新建文件夹</td><td></td><td></td><td></td><td></td></tr>
          <tr><td><svg class="ico"><use href="#doc"/></svg>QGroundControl64 (1).apk</td><td></td><td></td><td></td><td></td></tr>
          <tr><td><svg class="ico"><use href="#mp4"/></svg>101#7200-9500-1080p60.mp4</td><td></td><td></td><td></td><td>0</td></tr>
          <tr><td><svg class="ico"><use href="#mp4"/></svg>103#7200-9500-1080p60.mp4</td><td></td><td></td><td></td><td>0</td></tr>
          <tr><td><svg class="ico"><use href="#mp4"/></svg>107#7200-9520-1080p60.mp4</td><td></td><td></td><td></td><td>0</td></tr>
          <tr><td><svg class="ico"><use href="#mp4"/></svg>109#7200-9500-1080p60.mp4</td><td></td><td></td><td></td><td>0</td></tr>
          <tr><td><svg class="ico"><use href="#mp4"/></svg>111#7200-9520-1080p60.mp4</td><td></td><td></td><td></td><td>0</td></tr>
          <tr><td><svg class="ico"><use href="#mp4"/></svg>112#7200-9500-1080p60.mp4</td><td></td><td></td><td></td><td>0</td></tr>
          <tr><td><svg class="ico"><use href="#mp4"/></svg>118#7200-9500-1080p60.mp4</td><td></td><td></td><td></td><td>0</td></tr>
          <tr><td><svg class="ico"><use href="#mp4"/></svg>119#7200-9500-1080p60.mp4</td><td></td><td></td><td></td><td>0</td></tr>
          <tr><td><svg class="ico"><use href="#mp4"/></svg>119#7200-9520-1080p60.mp4</td><td></td><td></td><td></td><td>0</td></tr>
          <tr><td><svg class="ico"><use href="#mp4"/></svg>120#7200-9500-1080p60.mp4</td><td></td><td></td><td></td><td>0</td></tr>
          <tr><td><svg class="ico"><use href="#ue"/></svg>rk3566_ai.txt</td><td></td><td></td><td></td><td></td></tr>
          <tr class="selected"><td><svg class="ico"><use href="#ue"/></svg>rockchip.txt</td><td>2017/8/4 17:05</td><td>TXT 文件</td><td>1 KB</td><td></td></tr>
          <tr><td><svg class="ico"><use href="#ue"/></svg>rpdzkj.txt</td><td>2017/8/4 9:03</td><td>TXT 文件</td><td>1 KB</td><td></td></tr>
          <tr><td><svg class="ico"><use href="#doc"/></svg>uart_test</td><td>2024/6/11 11:17</td><td>文件</td><td>19 KB</td><td></td></tr>
        </tbody>
      </table>
      <div class="hscroll">
        <svg><use href="#chev-left"/></svg>
        <div class="track"><div class="thumb"></div></div>
        <svg><use href="#chev-right"/></svg>
      </div>
    </main>
  </div>

  <footer class="statusbar">
    <span>31 个项目</span>
    <span>选中 1 个项目&nbsp; 25 字节</span>
    <div class="views">
      <button class="on" aria-label="详细信息"><svg viewBox="0 0 24 24"><path d="M1.500 1.500h5v21h-5zM2 7h4M2 12h4M2 17h4" fill="#fff" stroke="#999"/><path d="M3 3h2v2H3zM3 8.500h2v2H3z" fill="#286"/><path d="M3 14h2v2H3z" fill="#c33"/><path d="M9 4h5M17 4h6M9 9.500h5M17 9.500h6M9 15h5M17 15h6M9 20.500h5M17 20.500h6" stroke="#777" stroke-width="1.300"/></svg></button>
      <button aria-label="大图标"><svg><use href="#picture"/></svg></button>
    </div>
  </footer>
</div>

<!-- editor window -->
<section class="editor">
  <header class="ed-title">
    <svg class="ico"><use href="#ue"/></svg>
    <span>UltraEdit-32 - [G:\rockchip.txt]</span>
    <div class="win-buttons">
      <button aria-label="最小化"><svg><use href="#min"/></svg></button>
      <button aria-label="最大化"><svg><use href="#max"/></svg></button>
      <button aria-label="关闭"><svg><use href="#close"/></svg></button>
    </div>
  </header>
  <div class="ed-menu">
    <span class="grip"></span>
    <svg class="ico"><use href="#e-app"/></svg>
    <button>文件(<u>F</u>)</button>
    <button>编辑(<u>E</u>)</button>
    <button>搜索(<u>S</u>)</button>
    <button>工程(<u>P</u>)</button>
    <button>查看(<u>V</u>)</button>
    <button>格式(<u>T</u>)</button>
    <button>列(<u>L</u>)</button>
    <button>宏(<u>M</u>)</button>
    <button>高级(<u>A</u>)</button>
    <button>窗口(<u>W</u>)</button>
    <button>帮助</button>
    <div class="mdi">
      <button class="raised" aria-label="最小化"><svg viewBox="0 0 24 24"><path d="M6 17h10" stroke="#000" stroke-width="3"/></svg></button>
      <button class="raised" aria-label="还原"><svg viewBox="0 0 24 24"><path d="M5 12h9v7H5zM5 10.500h9M9 9V5h10v8h-4M9 4h10" fill="none" stroke="#000" stroke-width="2"/></svg></button>
      <button class="raised" aria-label="关闭"><svg viewBox="0 0 24 24"><path d="M6 6l11 13M17 6L6 19" stroke="#000" stroke-width="3.500"/></svg></button>
    </div>
  </div>
  <div class="ed-tools">
    <span class="grip"></span>
    <button aria-label="新建"><svg class="ico"><use href="#e-new"/></svg></button>
    <button aria-label="打开"><svg class="ico"><use href="#e-open"/></svg></button>
    <button aria-label="关闭"><svg class="ico"><use href="#e-close"/></svg></button>
    <button aria-label="保存"><svg class="ico"><use href="#e-save"/></svg></button>
    <i></i>
    <button aria-label="打印"><svg class="ico"><use href="#e-print"/></svg></button>
    <button aria-label="预览"><svg class="ico"><use href="#e-preview"/></svg></button>
    <button aria-label="分页"><svg class="ico"><use href="#e-layout"/></svg></button>
    <button aria-label="字体"><svg class="ico"><use href="#e-replace"/></svg></button>
    <i></i>
    <button aria-label="换行"><svg class="ico"><use href="#e-wrap"/></svg></button>
    <i></i>
    <button aria-label="十六进制"><svg class="ico"><use href="#e-hex"/></svg></button>
    <i></i>
    <button aria-label="列模式"><svg class="ico"><use href="#e-para"/></svg></button>
    <i></i>
    <button aria-label="剪切"><svg class="ico"><use href="#e-cut"/></svg></button>
    <button aria-label="复制"><svg class="ico"><use href="#e-copy"/></svg></button>
    <button aria-label="粘贴"><svg class="ico"><use href="#e-paste"/></svg></button>
    <i></i>
    <button aria-label="左对齐"><svg class="ico"><use href="#e-left"/></svg></button>
    <button aria-label="居中"><svg class="ico"><use href="#e-center"/></svg></button>
    <button aria-label="右对齐"><svg class="ico"><use href="#e-right"/></svg></button>
    <button aria-label="两端对齐"><svg class="ico"><use href="#e-justify"/></svg></button>
    <i></i>
    <label class="combo"><select aria-label="查找内容"><option>vi</option></select><span class="raised"><svg viewBox="0 0 16 16"><path d="M2 5h12l-6 7z"/></svg></span></label>
    <button aria-label="查找"><svg class="ico"><use href="#e-find"/></svg></button>
    <button aria-label="查找上一个"><svg class="ico"><use href="#e-prev"/></svg></button>
    <button aria-label="查找下一个"><svg class="ico"><use href="#e-next"/></svg></button>
    <button aria-label="替换"><svg class="ico"><use href="#e-repl"/></svg></button>
    <button aria-label="更多"><svg class="ico"><use href="#e-more"/></svg></button>
  </div>
  <div class="ed-tabs">
    <span class="grip"></span>
    <div class="tabstrip">
      <button class="ed-tab">rockchip.txt</button>
      <div class="strip-body"></div>
    </div>
  </div>
  <div class="ed-main">
    <div class="ed-view">
      <div class="code" role="textbox" aria-multiline="true">
        <div class="line current"><b>1</b><span class="sel caret">2025-04-08</span></div>
        <div class="line"><b>2</b><span class="sel">17:44</span></div>
        <div class="line"><b>3</b><span class="sel"></span></div>
        <div class="line"><b>4</b><span class="sel">test</span></div>
        <div class="line"><b>5</b></div>
        <div class="line"><b>6</b></div>
        <div class="line"><b>7</b></div>
      </div>
      <div class="ed-vs">
        <span class="raised split"></span>
        <span class="raised btn"><svg viewBox="0 0 16 16"><path d="M3 11h10L8 5z"/></svg></span>
        <span class="raised thumb"></span>
        <span class="raised btn"><svg viewBox="0 0 16 16"><path d="M3 5h10l-5 6z"/></svg></span>
      </div>
    </div>
    <div class="ed-hs">
      <span class="raised btn"><svg viewBox="0 0 16 16"><path d="M11 3v10L5 8z"/></svg></span>
      <span class="raised thumb"></span>
      <span class="raised btn"><svg viewBox="0 0 16 16"><path d="M5 3v10l6-5z"/></svg></span>
    </div>
  </div>
  <footer class="ed-status">
    <span class="msg">如需帮助，请按 F1</span>
    <span class="cell w-pos">行 1, 列 1, CW</span>
    <span class="cell w-enc">UNIX</span>
    <span class="cell w-enc"></span>
    <span class="cell w-mod">修改: 2017/8/4 17:05:22</span>
    <span class="cell w-sel">选定大小: 27</span>
    <span class="cell w-ins">插入</span>
    <span class="cell w-ins"></span>
    <svg class="resize" viewBox="0 0 20 20"><path d="M2 20L20 2M8 20L20 8M14 20l6-6" stroke="#999" stroke-width="2"/></svg>
  </footer>
</section>

<!-- input method bar -->
<div class="ime">
  <svg class="ime-logo"><use href="#sogou"/></svg>
  <button class="ime-zh">中</button>
  <button aria-label="标点"><svg class="ico" viewBox="0 0 24 24"><circle cx="7" cy="9" r="2.500" fill="none" stroke="#0a74d8" stroke-width="2"/><path d="M15 13h5c0 4-1 6-4 8l-1-1c1-1 2-2 2-3h-2z" fill="#0a74d8"/></svg></button>
  <button aria-label="语音"><svg class="ico" viewBox="0 0 24 24"><rect x="8" y="0" width="8" height="15" rx="4" fill="#0a74d8"/><path d="M4 11c0 10 16 10 16 0M12 19v5M8 23h8" fill="none" stroke="#0a74d8" stroke-width="2"/></svg></button>
  <button aria-label="键盘"><svg class="ico" viewBox="0 0 24 24"><rect x="0" y="2" width="24" height="20" rx="3" fill="#0a74d8"/><path d="M3 6h18M3 11h18" stroke="#fff" stroke-width="3" stroke-dasharray="3 2"/><path d="M3 17h3M8 17h8M18 17h3" stroke="#fff" stroke-width="3"/></svg></button>
  <button class="skin" aria-label="皮肤"><svg class="ico" viewBox="0 0 24 24"><path d="M7 3l5 3 5-3 5 4-3 6-2-1v11H7V12l-2 1-5-6z" fill="url(#gShirt)"/></svg></button>
  <button aria-label="工具箱"><svg class="ico" viewBox="0 0 24 24"><rect x="2" y="2" width="9" height="9" rx="3" fill="#0a74d8"/><rect x="14" y="3" width="7" height="7" rx="2.500" fill="none" stroke="#0a74d8" stroke-width="2.500"/><rect x="2" y="13" width="9" height="9" rx="3" fill="#0a74d8"/><rect x="13" y="13" width="9" height="9" rx="3" fill="#0a74d8"/></svg></button>
  <button class="avatar" aria-label="头像"><svg viewBox="0 0 32 32"><ellipse cx="15" cy="17" rx="14" ry="14" fill="#fdf3f0" stroke="#eadcdc"/><path d="M2 13c6-4 13-4 20-2l-2 7c-5 2-8-3-10 0-2 2-5 1-8-5z" fill="#e8602a"/><path d="M4 17l5 5 3-5zM14 20l4 4 1-5z" fill="#432"/><path d="M28 9l1 4 3 1-3 1-1 4-1-4-3-1 3-1z" fill="#ffd94a"/></svg></button>
</div>

<footer class="taskbar">
  <button class="start" aria-label="开始"><svg viewBox="0 0 24 24"><path d="M0 3l10-1.500V11H0zM11 1.400L24 0v11H11zM0 12h10v9.500L0 20zM11 12h13v12l-13-2z"/></svg></button>
  <div class="tasks t1">
    <button class="task"><svg><use href="#folder"/></svg>2...</button>
    <button class="task"><svg><use href="#drive"/></svg>U...</button>
    <button class="task"><svg><use href="#pinwheel"/></svg>4....</button>
    <button class="task"><svg><use href="#pinwheel"/></svg>2...</button>
    <button class="task solo" aria-label="浏览器"><svg><use href="#pinwheel"/></svg></button>
    <button class="task solo" aria-label="浏览器"><svg><use href="#pinwheel"/></svg></button>
  </div>
  <button class="pinned" aria-label="画图"><svg><use href="#paint"/></svg></button>
  <button class="task current-app"><svg><use href="#ue"/></svg>Ul...</button>
  <div class="tasks t2">
    <button class="task"><svg><use href="#notepad"/></svg>无...</button>
    <button class="task solo" aria-label="记事本"><svg><use href="#notepad"/></svg></button>
    <button class="task"><svg><use href="#sync"/></svg>r...</button>
    <button class="task solo" aria-label="命令提示符"><svg><use href="#cmd"/></svg></button>
    <button class="task"><svg><use href="#shell"/></svg>1...</button>
    <button class="task solo" aria-label="工具"><svg><use href="#tools"/></svg></button>
    <button class="task"><svg><use href="#bird"/></svg>1...</button>
  </div>
  <button class="pinned" aria-label="WPS"><svg><use href="#wps"/></svg></button>
  <div class="tasks t3">
    <button class="task solo" aria-label="微信"><svg><use href="#wechat"/></svg></button>
    <button class="task solo" aria-label="微信"><svg><use href="#wechat"/></svg></button>
    <button class="task solo" aria-label="微信"><svg><use href="#wechat"/></svg></button>
    <button class="task solo" aria-label="微信"><svg><use href="#wechat"/></svg></button>
  </div>
  <div class="tray">
    <div class="usb">
      <svg viewBox="0 0 52 40"><path d="M15 21c14 10 28 4 30-8 12 14 4 26-8 26-10 0-19-6-22-18z" fill="url(#gMoon)"/><path d="M3 9h13v6H3z" fill="#ddd" stroke="#444" stroke-width="1.500"/><rect x="1" y="14" width="17" height="19" rx="2" fill="#4cb818" stroke="#444" stroke-width="1.500"/><path d="M9.500 17v13M6 21v3l3.500 3L13 24v-3" fill="none" stroke="#fff" stroke-width="1.500"/></svg>
      <span>1</span>
    </div>
    <button aria-label="显示隐藏的图标"><svg class="ico"><use href="#chev-up"/></svg></button>
    <button aria-label="设备"><svg class="ico" viewBox="0 0 24 24"><path d="M2 1h20v22H2z" fill="#e4e4e4"/><path d="M3 2h16v20H3z" fill="#8d8d8d"/></svg></button>
    <button aria-label="企业微信"><svg class="ico" viewBox="0 0 24 24"><path d="M18 6a9 9 0 1 0-7 14" fill="none" stroke="#1e8ff0" stroke-width="3"/><path d="M4 17l-1 5 5-2z" fill="#1e8ff0"/><path d="M17 11l3 4h-6z" fill="#2a6be8"/><path d="M21 14l3 3-4 3z" fill="#e33"/><path d="M17 24l-3-4h6z" fill="#f5a300"/><path d="M12 15l3 3-4 3z" fill="#5b3"/></svg></button>
    <button aria-label="微信"><svg class="ico"><use href="#wechat"/></svg></button>
    <button aria-label="电池"><svg class="ico" viewBox="0 0 24 24"><path d="M7 9h15v8H7z"/><path d="M5 12v7h18V7H10M24 11v4M1 5h6v4c0 2-1 2-3 2s-3 0-3-2zM3 2v3M5.500 2v3M4 11v4h3" fill="none" stroke="#000" stroke-width="1.300"/></svg></button>
    <button aria-label="网络"><svg class="ico" viewBox="0 0 24 24"><path d="M7 4h16v13H4v-6M13 17v4M9 21.500h9M1 3h5v6H1zM3.500 9v12" fill="none" stroke="#000" stroke-width="1.300"/></svg></button>
    <button aria-label="静音"><svg class="ico" viewBox="0 0 24 24"><path d="M2 9h3l6-5v16l-6-5H2zM14 9l7 7M21 9l-7 7" fill="none" stroke="#000" stroke-width="1.300"/></svg></button>
    <button class="lang" aria-label="中文"><svg class="ico" viewBox="0 0 24 24"><path d="M10 1h4v4h8v11h-8v7h-4v-7H2V5h8z" fill="#fff" stroke="#333" stroke-width="1.300"/><path d="M5 8h5v5H5zM14 8h5v5h-5zM12 3v18" fill="none" stroke="#333" stroke-width="1.300"/></svg></button>
    <button aria-label="搜狗输入法"><svg class="ico"><use href="#sogou"/></svg></button>
    <button class="temp"><span>81</span></button>
    <button class="clock">20:54<br>2025/4/8</button>
    <button class="notice" aria-label="通知"><svg viewBox="0 0 36 40"><path d="M1 2h25v20H9l-4 5v-5H1z"/><path d="M5 8h17M5 13h17" stroke="#fff" stroke-width="2"/></svg><span>23</span></button>
    <span class="peek"></span>
  </div>
</footer>

</body>
</html>
```
FILE: styles.css
```css
* {
  box-sizing: border-box;
}

body {
  margin: 0;
  height: 100vh;
  display: flex;
  flex-direction: column;
  overflow: hidden;
  font-family: "Noto Sans", "Noto Sans CJK SC", sans-serif;
  font-size: 18px;
  line-height: 24px;
  color: #000;
  background-color: #fff;
}

button {
  padding: 0;
  border: none;
  background: none;
  font: inherit;
  color: inherit;
  white-space: nowrap;
}

a {
  color: inherit;
  text-decoration: none;
}

svg {
  display: block;
  flex: none;
  width: 24px;
  height: 24px;
}

.gradients {
  position: absolute;
  width: 0;
  height: 0;
}

.sprite {
  display: none;
}

.ue-text {
  font: italic bold 12px "Liberation Sans", sans-serif;
  fill: #1a1500;
}

.mp4-text {
  font: bold 6px "Liberation Sans", sans-serif;
  fill: #fff;
}

.hex-text {
  font: bold 12px "Liberation Serif", serif;
  fill: #0a7c6c;
}

.cmd-text {
  font: bold 11px "Liberation Mono", monospace;
  fill: #fff;
}

/* Explorer window */
.explorer {
  flex: 1;
  min-height: 0;
  display: flex;
  flex-direction: column;
}

.titlebar {
  position: relative;
  display: flex;
  align-items: center;
  height: 34px;
  color: #999;
}

.bar {
  width: 1px;
  height: 20px;
  margin: 0 8px 0 4px;
  background-color: #999;
}

.quick {
  display: flex;
  justify-content: center;
  width: 30px;
}

.bar + .quick {
  margin-left: 6px;
}

.ico-sm {
  width: 18px;
  height: 24px;
}

.progress {
  position: absolute;
  top: 0;
  left: 43%;
  width: 362px;
  height: 2px;
  background-color: #e6e6e6;
}

.progress span {
  display: block;
  width: 20%;
  height: 2px;
  background-color: #0078d7;
}

.win-buttons {
  display: flex;
  margin-left: auto;
}

.win-buttons button {
  display: flex;
  justify-content: center;
  width: 70px;
}

.win-buttons svg {
  width: 16px;
  height: 16px;
}

.titlebar .win-buttons {
  padding-right: 2px;
}

.tabs {
  display: flex;
  height: 38px;
  border-bottom: 1px solid #dadbdc;
  color: #222;
}

.tab {
  width: 77px;
}

.tab.file {
  width: 84px;
  height: 34px;
  background-color: #0063b1;
  color: #fff;
}

.tab.active {
  height: 38px;
  background-color: #f5f6f7;
  border: 1px solid #dadbdc;
  border-bottom: none;
}

.tab-tools {
  display: flex;
  align-items: center;
  gap: 11px;
  margin-left: auto;
  padding-right: 5px;
  color: #999;
}

.tab-tools .ico {
  width: 20px;
}

.help {
  width: 22px;
  height: 22px;
  line-height: 22px;
  border-radius: 50%;
  background-color: #0067c8;
  color: #fff;
}

/* Ribbon */
.ribbon {
  display: flex;
  height: 150px;
  padding: 3px 0;
  background-color: #f5f6f7;
  border-bottom: 1px solid #dadbdc;
  color: #222;
}

.group {
  display: flex;
  flex-direction: column;
  justify-content: space-between;
  border-right: 1px solid #e2e3e4;
}

.g-clip { width: 367px; }
.g-org { width: 274px; }
.g-new { width: 199px; }
.g-open { width: 186px; }
.g-sel { width: 124px; }

.group h2 {
  margin: 0;
  font-size: 18px;
  line-height: 26px;
  font-weight: normal;
  text-align: center;
  color: #444;
}

.group-body {
  display: flex;
  align-items: flex-start;
  padding: 3px 4px 0;
}

.g-clip .group-body {
  padding-left: 9px;
}

.big {
  width: 62px;
  display: flex;
  flex-direction: column;
  align-items: center;
  padding-top: 5px;
}

.big.wide {
  width: 78px;
}

.big svg {
  width: 44px;
  height: 44px;
}

.big .i32 {
  width: 32px;
}

.big span {
  margin-top: 7px;
}

.dim {
  color: #777;
}

/* drop-down arrow of a ribbon button */
.drop::after {
  content: "";
  border: 4px solid transparent;
  border-top: 5px solid #000;
  border-bottom: none;
}

.vline {
  width: 2px;
  height: 100px;
  margin: 3px 4px;
  background-color: #e2e3e4;
}

.smalls {
  display: flex;
  flex-direction: column;
  padding-left: 4px;
}

.g-sel .smalls {
  padding-left: 5px;
}

.small {
  display: flex;
  align-items: center;
  gap: 4px;
  height: 32px;
}

.small.drop::after {
  margin-left: 3px;
}

.small .ico {
  height: 22px;
}

.loose .small {
  height: 36px;
}

/* Address row */
.address-row {
  display: flex;
  align-items: center;
  height: 50px;
  padding: 0 13px 0 18px;
}

.arrow {
  margin-right: 24px;
}

.arrow + .arrow {
  margin-right: 14px;
}

.arrow svg {
  width: 22px;
}

.up {
  margin: 0 7px 0 10px;
}

.recent svg,
.sep {
  width: 16px;
  height: 16px;
  color: #666;
}

.address {
  flex: 1;
  display: flex;
  align-items: center;
  height: 34px;
  margin-right: 13px;
  padding-left: 3px;
  border: 1px solid #d9d9d9;
}

.address .sep {
  margin: 0 8px 0 5px;
}

.address a + .sep {
  margin: 0 8px;
}

.addr-drop {
  margin-left: auto;
  padding: 0 3px;
  color: #666;
}

.addr-drop svg {
  width: 16px;
  height: 16px;
}

.refresh {
  height: 32px;
  padding: 0 2px;
  border-left: 1px solid #d9d9d9;
}

.refresh svg {
  width: 20px;
}

.search {
  display: flex;
  align-items: center;
  width: 513px;
  height: 34px;
  padding: 0 10px;
  border: 1px solid #d9d9d9;
}

.search input {
  flex: 1;
  border: none;
  padding: 0;
  outline: none;
  font: inherit;
}

.search input::placeholder {
  color: #6d6d6d;
}

.search svg {
  width: 20px;
}

/* Panes */
.panes {
  flex: 1;
  min-height: 0;
  display: flex;
}

.tree {
  flex: none;
  width: 961px;
  overflow: hidden;
}

.tree ul {
  margin: 0;
  padding: 1px 0 0;
  list-style: none;
}

.tree .root {
  padding-top: 12px;
}

.tree a {
  display: flex;
  align-items: center;
  gap: 5px;
  height: 36px;
  padding-left: 36px;
  font-size: 19px;
}

.tree .l2 {
  padding-left: 48px;
}

.tree .l3 {
  padding-left: 60px;
}

.tree .zh {
  font-size: 18px;
}

.tree .selected,
.files .selected td {
  background-color: #d9d9d9;
}

.vscroll {
  flex: none;
  display: flex;
  flex-direction: column;
  align-items: center;
  width: 25px;
  padding: 7px 0 4px;
  background-color: #f0f0f0;
  color: #555;
}

.vscroll svg,
.hscroll svg {
  width: 18px;
  height: 18px;
}

.vscroll .track {
  flex: 1;
  width: 25px;
  display: flex;
  flex-direction: column;
  justify-content: flex-end;
  padding-bottom: 80px;
}

.vscroll .thumb {
  height: 78%;
  background-color: #cdcdcd;
}

.files {
  flex: 1;
  min-width: 0;
  display: flex;
  flex-direction: column;
  justify-content: space-between;
  margin-left: 2px;
  border-left: 1px solid #f0f0f0;
}

.files table {
  margin-left: 24px;
  table-layout: fixed;
  border-collapse: collapse;
}

.c-name { width: 832px; }
.c-date { width: 243px; }
.c-type { width: 203px; }
.c-size { width: 135px; }

.files th {
  position: relative;
  height: 42px;
  padding: 0 0 0 10px;
  border-left: 1px solid #e5e5e5;
  font-weight: normal;
  text-align: left;
  color: #4c607a;
}

.files th:first-child {
  padding-left: 5px;
  border-left: none;
}

.sorted svg {
  position: absolute;
  left: 47%;
  top: 2px;
  width: 12px;
  height: 8px;
}

.files tbody::before {
  content: "";
  display: block;
  height: 8px;
}

.files td {
  height: 32px;
  padding: 0 0 0 10px;
  color: #6d6d6d;
}

.files td:first-child {
  display: flex;
  align-items: center;
  gap: 6px;
  padding-left: 6px;
  font-size: 19px;
  color: #000;
}

.files td.zh:first-child {
  font-size: 18px;
}

.files td:nth-child(4) {
  padding-right: 11px;
  text-align: right;
}

.files td:last-child {
  padding-right: 50px;
  text-align: right;
}

.hscroll {
  display: flex;
  align-items: center;
  height: 24px;
  padding: 0 4px 0 7px;
  background-color: #f0f0f0;
  color: #555;
}

.hscroll .track {
  flex: 1;
  padding: 0 82px 0 4px;
}

.hscroll .thumb {
  height: 24px;
  background-color: #cdcdcd;
}

.statusbar {
  display: flex;
  align-items: center;
  height: 35px;
  padding-left: 22px;
  color: #1e395b;
}

.statusbar > span {
  margin-right: 17px;
  padding-right: 17px;
  border-right: 1px solid #eee;
}

.views {
  display: flex;
  align-items: center;
  margin-left: auto;
  padding-right: 7px;
}

.views button {
  display: flex;
  align-items: center;
  justify-content: center;
  width: 34px;
  height: 35px;
}

.views .on {
  background-color: #cce8f6;
  border: 1px solid #26a0da;
}

/* UltraEdit window, floats over the explorer */
.editor {
  position: absolute;
  left: 1346px;
  top: 341px;
  width: 1153px;
  height: 868px;
  display: flex;
  flex-direction: column;
  overflow: hidden;
  border: 1px solid #666;
  border-bottom: none;
  background-color: #f0f0f0;
  box-shadow: 0 5px 24px rgba(0, 0, 0, 0.35);
}

.ed-title {
  display: flex;
  align-items: center;
  gap: 6px;
  height: 47px;
  padding-left: 12px;
  background-color: #fff;
  border-bottom: 1px solid #aaa;
  font-size: 19px;
}

.ed-menu,
.ed-tools {
  display: flex;
  align-items: center;
  height: 47px;
  padding-left: 3px;
  border-bottom: 2px solid #a8a8a8;
}

.ed-menu {
  padding-top: 2px;
}

.ed-tools {
  height: 35px;
}

.grip {
  flex: none;
  width: 7px;
  align-self: stretch;
  border: solid #a0a0a0;
  border-width: 0 1px;
}

.ed-menu .ico {
  margin: 0 0 6px 2px;
}

.ed-menu > button {
  padding: 0 9px;
}

.mdi {
  display: flex;
  margin: 0 3px 0 auto;
}

.mdi button {
  display: flex;
  align-items: center;
  justify-content: center;
  width: 51px;
  height: 28px;
}

.mdi button:last-child {
  margin-left: 3px;
}

.raised {
  border: 2px solid;
  border-color: #fff #777 #777 #fff;
  background-color: #f0f0f0;
}

.ed-tools > button {
  display: flex;
  flex: none;
  justify-content: center;
  width: 40px;
}

.ed-tools i {
  flex: none;
  width: 13px;
  height: 26px;
  background: linear-gradient(#a8a8a8, #a8a8a8) center / 1px 100% no-repeat;
}

.combo {
  flex: none;
  display: flex;
  width: 142px;
  height: 30px;
  margin: 0 4px 0 6px;
  border: 2px solid #777;
  background-color: #fff;
}

.combo select {
  flex: 1;
  appearance: none;
  border: none;
  padding: 0 3px;
  background: none;
  font: inherit;
  font-size: 15px;
}

.combo span {
  display: flex;
  align-items: center;
  width: 25px;
}

.combo span svg {
  width: 20px;
  height: 14px;
}

.ed-tabs {
  display: flex;
  gap: 8px;
  padding: 3px 2px 0 5px;
}

.tabstrip {
  flex: 1;
}

.ed-tab {
  width: 130px;
  height: 28px;
  display: block;
  border-left: 1px solid #fff;
  border-top: 1px solid #fff;
  border-right: 2px solid #777;
  font-family: "Liberation Mono", monospace;
  font-size: 15px;
}

.strip-body {
  height: 28px;
  border: solid #777;
  border-width: 0 2px 2px 0;
  box-shadow: inset 0 1px #fff;
}

.ed-main {
  flex: 1;
  display: flex;
  flex-direction: column;
  margin: 9px 1px 0 0;
  border: solid #6c6c6c;
  border-width: 4px 3px 2px 3px;
  background-color: #fff;
}

.ed-view {
  flex: 1;
  display: flex;
}

.code {
  flex: 1;
  display: flex;
  flex-direction: column;
  font-family: "Liberation Mono", monospace;
  font-size: 20px;
  background: linear-gradient(#f0f0f0, #f0f0f0) left / 35px 100% no-repeat;
  padding-top: 8px;
}

.line {
  display: flex;
  height: 24px;
}

.line b {
  width: 35px;
  margin-right: 6px;
  padding-right: 2px;
  font-size: 16px;
  font-weight: normal;
  text-align: right;
}

.line.current {
  background: linear-gradient(#ff0, #ff0) right / calc(100% - 41px) 100% no-repeat;
}

.sel {
  padding-right: 6px;
  background-color: #0078d7;
  color: #fff;
}

.caret {
  box-shadow: inset 2px 0 #ff7d20;
}

.ed-vs {
  display: flex;
  flex-direction: column;
  width: 26px;
  background-color: #f8f8f8;
}

.ed-vs .split {
  height: 10px;
}

.ed-vs .btn,
.ed-hs .btn {
  display: flex;
  align-items: center;
  justify-content: center;
  width: 26px;
  height: 26px;
}

.btn svg {
  width: 16px;
  height: 16px;
}

.ed-vs .thumb {
  flex: 1;
  margin-bottom: 110px;
}

.ed-hs {
  display: flex;
  height: 26px;
  padding-right: 25px;
  background-color: #f8f8f8;
}

.ed-hs .thumb {
  width: 474px;
  margin-right: auto;
}

.ed-status {
  display: flex;
  align-items: center;
  gap: 3px;
  height: 29px;
  padding-left: 2px;
  border-top: 1px solid #fff;
}

.msg {
  width: 237px;
}

.cell {
  height: 24px;
  padding-left: 2px;
  line-height: 22px;
  border: 1px solid;
  border-color: #999 #fff #fff #999;
  white-space: nowrap;
}

.w-pos { width: 219px; }
.w-enc { width: 69px; }
.w-mod { width: 226px; }
.w-sel { width: 190px; }
.w-ins { width: 44px; }

.resize {
  width: 20px;
  height: 22px;
  margin: 4px 2px 0 auto;
}

/* Input method bar, floats above the taskbar */
.ime {
  position: absolute;
  right: 93px;
  bottom: 171px;
  display: flex;
  align-items: center;
  width: 278px;
  height: 39px;
  padding-left: 24px;
  border: 1px solid #b8cde6;
  border-radius: 2px;
  background-color: #fff;
}

.ime-logo {
  position: absolute;
  left: -27px;
  top: -8px;
  width: 48px;
  height: 48px;
}

.ime button {
  display: flex;
  flex: none;
  justify-content: center;
  width: 36px;
}

.avatar svg {
  width: 32px;
  height: 32px;
}

.ime-zh {
  font-size: 22px;
  font-weight: bold;
  color: #0a74d8;
}

/* Skin update dot */
.skin {
  position: relative;
}

.skin::after {
  content: "";
  position: absolute;
  right: 2px;
  top: -5px;
  width: 9px;
  height: 9px;
  border-radius: 50%;
  background-color: #fc5130;
}

/* Taskbar */
.taskbar {
  display: flex;
  height: 60px;
  background: linear-gradient(90deg, #e3d5d5, #e5d5d6 20%, #dad2da 25%, #e8e6e6 29%, #ebebeb 60%, #eeeeee);
}

.start {
  width: 72px;
  margin-right: 143px;
  padding: 0 24px;
}

.tasks {
  display: flex;
}

.t1 { gap: 12px; }
.t2 { gap: 13px; margin: 0 2px 0 6px; }
.t3 { gap: 11px; margin-left: 2px; }

.task {
  display: flex;
  align-items: center;
  gap: 5px;
  width: 74px;
  height: 60px;
  padding-left: 2px;
  border-bottom: 3px solid #0078d7;
  overflow: hidden;
}

.task svg,
.pinned svg {
  width: 36px;
  height: 36px;
}

.task.solo {
  justify-content: center;
  padding-left: 0;
}

.task.current-app {
  width: 86px;
  padding-left: 8px;
  background: #f8f8f8;
}

.pinned {
  display: flex;
  align-items: center;
  justify-content: center;
  width: 66px;
}

.tray {
  display: flex;
  align-items: center;
  margin-left: auto;
}

.tray > button {
  display: flex;
  justify-content: center;
  width: 36px;
}

.usb {
  position: relative;
  margin-right: 28px;
}

.usb svg {
  width: 54px;
  height: 40px;
}

.usb span {
  position: absolute;
  right: 1px;
  top: 1px;
  width: 18px;
  height: 18px;
  border-radius: 50%;
  background-color: #c42b1c;
  color: #fff;
  font-size: 14px;
  line-height: 18px;
  text-align: center;
}

.tray .lang {
  margin-right: 7px;
}

.tray .temp {
  width: 66px;
}

.temp span {
  width: 34px;
  height: 34px;
  border-radius: 50%;
  background-color: #ff8126;
  color: #fff;
  line-height: 34px;
}

.tray .clock {
  display: block;
  width: 96px;
  font-size: 19px;
  line-height: 28px;
}

.tray .notice {
  position: relative;
  width: 56px;
  margin-left: 12px;
  margin-right: 14px;
}

.notice svg {
  width: 36px;
  height: 40px;
}

.notice span {
  position: absolute;
  right: 1px;
  bottom: -4px;
  width: 33px;
  height: 25px;
  border: 1px solid #777;
  border-radius: 12px;
  background-color: #ddd;
  font-weight: bold;
  line-height: 23px;
}

.peek {
  width: 8px;
  height: 60px;
  border-left: 1px solid #aaa;
}
```
